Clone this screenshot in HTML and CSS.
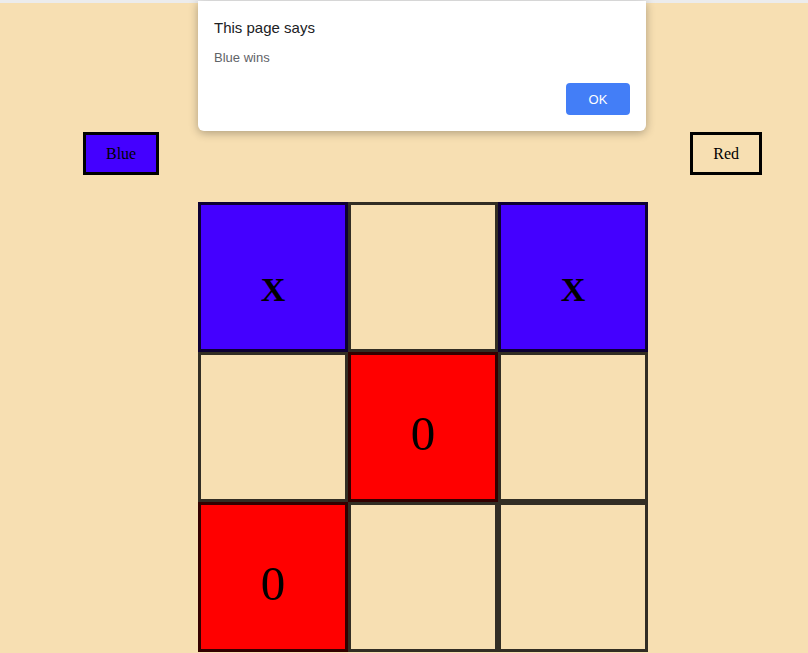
FILE: index.html
```html
<!DOCTYPE html>
<html>
<head>
<meta charset="utf-8">
<title>Tic Tac Toe</title>
<link rel="stylesheet" href="styles.css">
</head>
<body>
<div class="topbar"></div>
<div class="players">
  <button class="player player-blue">Blue</button>
  <button class="player player-red">Red</button>
</div>
<div class="board">
  <div class="cell cell-blue"><span class="mark mark-x">X</span></div>
  <div class="cell"></div>
  <div class="cell cell-blue"><span class="mark mark-x">X</span></div>
  <div class="cell"></div>
  <div class="cell cell-red"><span class="mark mark-o">0</span></div>
  <div class="cell"></div>
  <div class="cell cell-red"><span class="mark mark-o">0</span></div>
  <div class="cell"></div>
  <div class="cell"></div>
</div>
<div class="dialog">
  <div class="dialog-title">This page says</div>
  <div class="dialog-msg">Blue wins</div>
  <div class="dialog-actions">
    <button class="dialog-ok">OK</button>
  </div>
</div>
</body>
</html>
```
FILE: styles.css
```css
html, body {
  margin: 0;
  padding: 0;
}
body {
  background: #f7dfb2;
  font-family: "Liberation Serif", "Times New Roman", serif;
  height: 653px;
  overflow: hidden;
  position: relative;
}
.topbar {
  height: 3px;
  background: #ececec;
}
.players {
  display: flex;
  justify-content: space-between;
  padding: 0 46px 0 83px;
  margin-top: 129px;
}
.player {
  font-family: "Liberation Serif", "Times New Roman", serif;
  font-size: 16px;
  line-height: 19px;
  padding: 9px 20px;
  border: 3px solid #000;
  background: #f7dfb2;
  color: #000;
  margin: 0;
}
.player-blue {
  background: #4400ff;
}
.board {
  display: grid;
  grid-template-columns: repeat(3, 150px);
  grid-template-rows: repeat(3, 150px);
  width: 450px;
  margin: 27px 0 0 198px;
}
.cell {
  box-sizing: border-box;
  border: 3px solid rgba(0, 0, 0, 0.8);
  background: #f7dfb2;
  display: flex;
  align-items: center;
  justify-content: center;
}
.cell-blue {
  background: #4400ff;
}
.cell-red {
  background: #ff0000;
}
.mark {
  color: #000;
}
.mark-x {
  font-size: 34px;
  font-weight: bold;
  padding-top: 26px;
}
.mark-o {
  font-size: 49px;
  padding-top: 12px;
}
.dialog {
  position: absolute;
  left: 198px;
  top: 1px;
  width: 448px;
  height: 130px;
  box-sizing: border-box;
  background: #fff;
  border-radius: 0 0 6px 6px;
  box-shadow: 0 2px 10px rgba(0, 0, 0, 0.3);
  font-family: "Liberation Sans", Arial, sans-serif;
  padding: 18px 16px 0 16px;
}
.dialog-title {
  font-size: 15px;
  line-height: 18px;
  color: #202124;
}
.dialog-msg {
  font-size: 13px;
  line-height: 16px;
  color: #5f6368;
  margin-top: 13px;
}
.dialog-actions {
  display: flex;
  justify-content: flex-end;
  margin-top: 17px;
}
.dialog-ok {
  width: 64px;
  height: 32px;
  border: none;
  border-radius: 4px;
  background: #437ef7;
  color: #fff;
  font-family: "Liberation Sans", Arial, sans-serif;
  font-size: 13px;
  margin: 0;
}
```
